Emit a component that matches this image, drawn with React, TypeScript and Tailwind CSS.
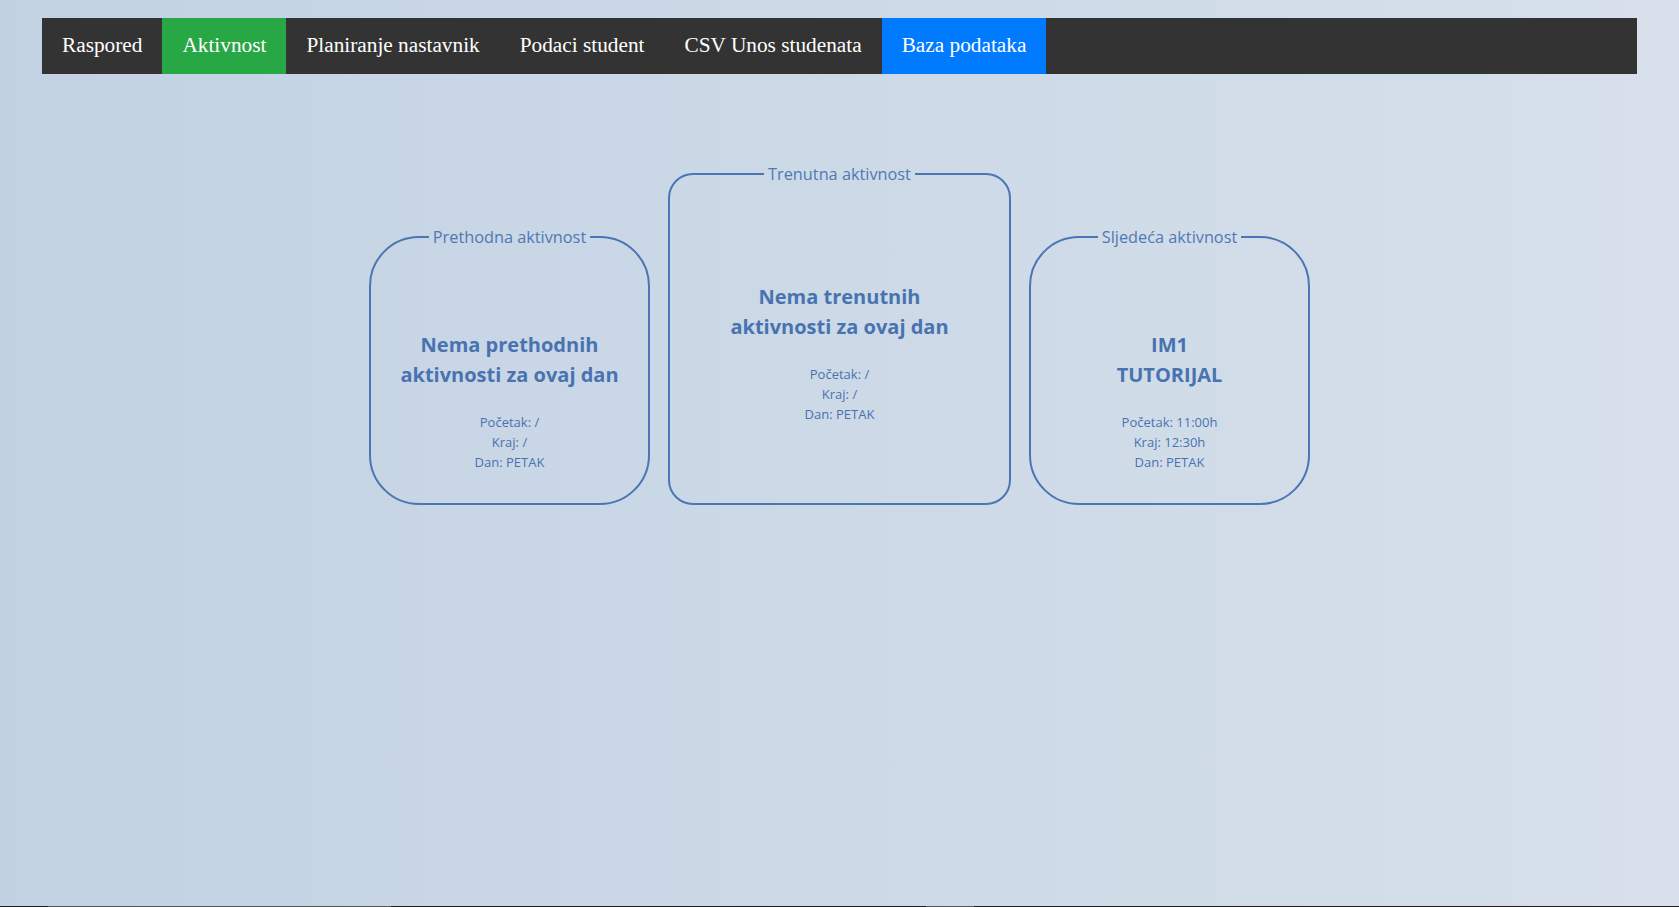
import React from "react";

type Activity = {
  legend: string;
  title: string[];
  start: string;
  end: string;
  day: string;
};

const navItems = [
  { label: "Raspored", bg: "" },
  { label: "Aktivnost", bg: "bg-[#28a745]" },
  { label: "Planiranje nastavnik", bg: "" },
  { label: "Podaci student", bg: "" },
  { label: "CSV Unos studenata", bg: "" },
  { label: "Baza podataka", bg: "bg-[#007bff]" },
];

const previous: Activity = {
  legend: "Prethodna aktivnost",
  title: ["Nema prethodnih", "aktivnosti za ovaj dan"],
  start: "/",
  end: "/",
  day: "PETAK",
};

const current: Activity = {
  legend: "Trenutna aktivnost",
  title: ["Nema trenutnih", "aktivnosti za ovaj dan"],
  start: "/",
  end: "/",
  day: "PETAK",
};

const next: Activity = {
  legend: "Sljedeća aktivnost",
  title: ["IM1", "TUTORIJAL"],
  start: "11:00h",
  end: "12:30h",
  day: "PETAK",
};

const ActivityCard = ({ activity, className }: { activity: Activity; className: string }) => {
  return (
    <fieldset
      className={`border-2 border-[#4a76b3] text-center text-[#4873b0] font-['Open_Sans',sans-serif] ${className}`}
    >
      <legend className="mx-auto px-1 text-[16.3px] leading-6 text-[#4f79b4]">{activity.legend}</legend>
      <h3 className="text-[20px] leading-[30px] font-bold">
        {activity.title.map((line, i) => (
          <div key={i}>{line}</div>
        ))}
      </h3>
      <div className="mt-[22px] text-[13px] leading-5">
        <div>Početak: {activity.start}</div>
        <div>Kraj: {activity.end}</div>
        <div>Dan: {activity.day}</div>
      </div>
    </fieldset>
  );
};

const App = () => {
  return (
    <div className="h-screen flex flex-col bg-gradient-to-r from-[#c2d2e3] to-[#d7e0eb]">
      <div className="flex-1 pt-[18px]">
        {/* Navigation */}
        <nav className="w-[95%] mx-auto bg-[#333333] flex font-['Liberation_Serif',serif] text-[21.3px] leading-6 text-white">
          {navItems.map((item) => (
            <a key={item.label} href="#" className={`block px-5 pt-[15px] pb-[17px] ${item.bg}`}>
              {item.label}
            </a>
          ))}
        </nav>

        {/* Activities */}
        <div className="mt-[88px] flex justify-center items-end gap-[18px]">
          <ActivityCard activity={previous} className="w-[281px] rounded-[50px] pt-[81px] pb-[31px]" />
          <ActivityCard activity={current} className="w-[343px] rounded-[25px] pt-[96px] pb-[79px]" />
          <ActivityCard activity={next} className="w-[281px] rounded-[50px] pt-[81px] pb-[31px]" />
        </div>
      </div>

      {/* bottom edge */}
      <div className="h-px flex bg-[#1e1e1e]">
        <div className="ml-[48px] w-[343px] bg-[#555555]" />
        <div className="ml-[535px] w-[48px] bg-[#555555]" />
      </div>
    </div>
  );
};

export default App;
